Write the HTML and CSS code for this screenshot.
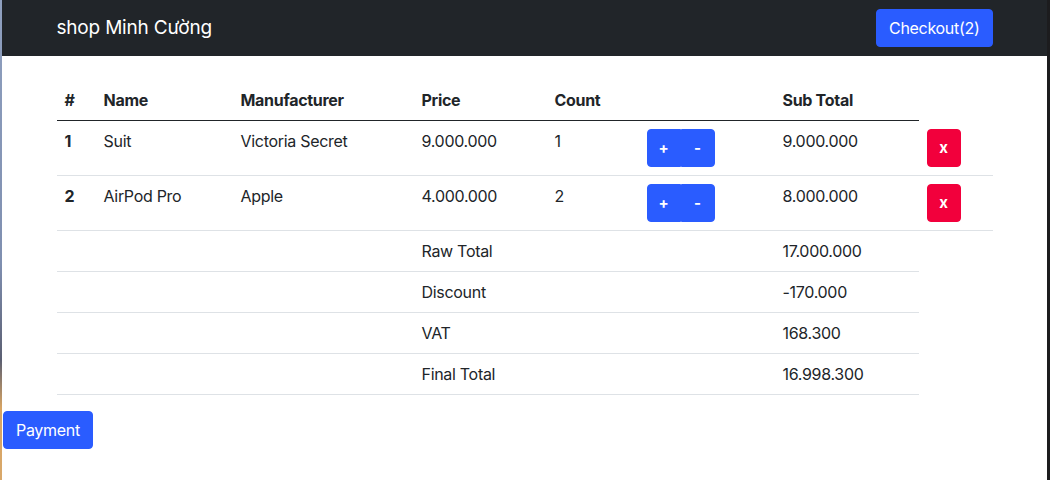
FILE: index.html
```html
<!DOCTYPE html>
<html lang="vi">
<head>
<meta charset="utf-8">
<title>shop Minh Cường</title>
<link rel="stylesheet" href="styles.css">
</head>
<body>
<div class="edge-left"></div>
<div class="app">
  <nav class="navbar">
    <div class="container nav-inner">
      <span class="brand">shop Minh Cường</span>
      <button class="btn btn-primary">Checkout(2)</button>
    </div>
  </nav>
  <div class="container">
    <table class="cart">
      <colgroup>
        <col class="c-idx"><col class="c-name"><col class="c-man"><col class="c-price"><col class="c-count"><col class="c-act"><col class="c-sub"><col class="c-del">
      </colgroup>
      <thead>
        <tr><th>#</th><th>Name</th><th>Manufacturer</th><th>Price</th><th>Count</th><th></th><th>Sub Total</th></tr>
      </thead>
      <tbody>
        <tr>
          <th>1</th><td>Suit</td><td>Victoria Secret</td><td>9.000.000</td><td>1</td>
          <td><div class="btn-group"><button class="btn btn-primary btn-sm-b">+</button><button class="btn btn-primary btn-sm-b">-</button></div></td>
          <td>9.000.000</td>
          <td><button class="btn btn-danger btn-sm-b">x</button></td>
        </tr>
        <tr>
          <th>2</th><td>AirPod Pro</td><td>Apple</td><td>4.000.000</td><td>2</td>
          <td><div class="btn-group"><button class="btn btn-primary btn-sm-b">+</button><button class="btn btn-primary btn-sm-b">-</button></div></td>
          <td>8.000.000</td>
          <td><button class="btn btn-danger btn-sm-b">x</button></td>
        </tr>
        <tr class="sum"><td></td><td></td><td></td><td>Raw Total</td><td></td><td></td><td>17.000.000</td></tr>
        <tr class="sum"><td></td><td></td><td></td><td>Discount</td><td></td><td></td><td>-170.000</td></tr>
        <tr class="sum"><td></td><td></td><td></td><td>VAT</td><td></td><td></td><td>168.300</td></tr>
        <tr class="sum"><td></td><td></td><td></td><td>Final Total</td><td></td><td></td><td>16.998.300</td></tr>
      </tbody>
    </table>
  </div>
  <button class="btn btn-primary payment">Payment</button>
</div>
<div class="edge-right"></div>
</body>
</html>
```

FILE: styles.css
```css
html, body {
  margin: 0;
  height: 100%;
}
body {
  display: flex;
  font-family: Inter, "Liberation Sans", sans-serif;
  font-size: 16px;
  line-height: 1.5;
  letter-spacing: -0.3px;
  color: #212529;
  background: #fff;
  overflow: hidden;
}
.edge-left {
  width: 2px;
  flex: none;
  background: linear-gradient(#8fa0bf 0%, #7f8fb0 55%, #5b5f72 75%, #d7a463 85%, #d9a86a 100%);
}
.edge-right {
  width: 3px;
  flex: none;
  background: #1c1c1e;
}
.app {
  flex: 1;
  min-width: 0;
}
.container {
  max-width: 960px;
  margin: 0 auto;
  padding: 0 12px;
  box-sizing: border-box;
}
.navbar {
  background: #212529;
  padding: 8px 0;
}
.nav-inner {
  display: flex;
  align-items: center;
  justify-content: space-between;
  height: 40px;
}
.brand {
  color: #fff;
  font-size: 19px;
  line-height: 30px;
  letter-spacing: -0.2px;
}
.btn {
  font-family: inherit;
  font-size: 16px;
  line-height: 24px;
  letter-spacing: -0.3px;
  padding: 6px 12px;
  border: 1px solid transparent;
  border-radius: 4px;
  color: #fff;
  cursor: pointer;
}
.btn-primary {
  background: #2a5cff;
  border-color: #2a5cff;
}
.btn-danger {
  background: #f2003c;
  border-color: #f2003c;
}
.btn-sm-b {
  width: 34px;
  height: 38px;
  padding: 0;
  font-size: 15px;
  font-weight: 700;
  letter-spacing: 0;
}
.btn-group {
  display: inline-flex;
}
.btn-group .btn:first-child {
  border-top-right-radius: 0;
  border-bottom-right-radius: 0;
}
.btn-group .btn:last-child {
  border-top-left-radius: 0;
  border-bottom-left-radius: 0;
}
.cart {
  width: 100%;
  table-layout: fixed;
  border-collapse: collapse;
  margin-top: 24px;
  margin-bottom: 16px;
  vertical-align: top;
}
.c-idx { width: 39px; }
.c-name { width: 137px; }
.c-man { width: 181px; }
.c-price { width: 133px; }
.c-count { width: 92px; }
.c-act { width: 136px; }
.c-sub { width: 144px; }
.c-del { width: 74px; }
.cart th, .cart td {
  padding: 8px;
  text-align: left;
  vertical-align: top;
  border-bottom: 1px solid #dee2e6;
}
.cart thead th {
  font-weight: 700;
  border-bottom: 1px solid #212529;
}
.cart tbody th {
  font-weight: 700;
}
.payment {
  display: block;
  margin-left: 1px;
}
```
